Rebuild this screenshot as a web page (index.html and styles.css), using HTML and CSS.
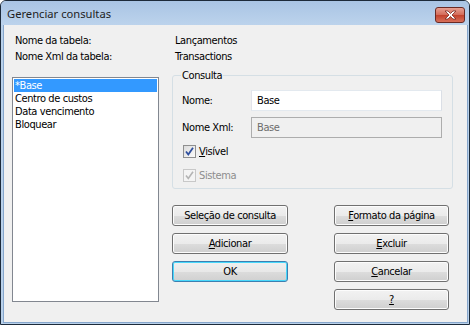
FILE: index.html
```html
<!DOCTYPE html>
<html lang="pt">
<head>
  <meta charset="UTF-8" />
  <title>Gerenciar consultas</title>
  <link rel="stylesheet" href="styles.css">
</head>
<body>
  <div class="window">
    <div class="titlebar">
      <span class="title">Gerenciar consultas</span>
      <span class="close-btn">
        <svg width="15" height="10" viewBox="0 0 15 10">
          <path d="M2 1 L5 1 L7.5 3.5 L10 1 L13 1 L9 5 L13 9 L10 9 L7.5 6.5 L5 9 L2 9 L6 5 Z" fill="#fff" stroke="#7a2a22" stroke-width="0.8" stroke-linejoin="round"/>
        </svg>
      </span>
    </div>

    <div class="client">
      <div class="info">
        <span>Nome da tabela:</span><span>Lançamentos</span>
        <span>Nome Xml da tabela:</span><span>Transactions</span>
      </div>

      <div class="main">
        <ul class="listbox">
          <li class="selected">*Base</li>
          <li>Centro de custos</li>
          <li>Data vencimento</li>
          <li>Bloquear</li>
        </ul>

        <div class="side">
          <fieldset class="groupbox">
            <legend>Consulta</legend>
            <div class="field-row">
              <label>Nome:</label>
              <span class="textbox">Base</span>
            </div>
            <div class="field-row">
              <label>Nome Xml:</label>
              <span class="textbox disabled">Base</span>
            </div>
            <div class="check">
              <span class="box">
                <svg width="11" height="11" viewBox="0 0 11 11"><path d="M2 5.5 L4.3 8.5 L9 1.8" fill="none" stroke="#2f4f9e" stroke-width="1.8"/></svg>
              </span>
              <span><u>V</u>isível</span>
            </div>
            <div class="check off">
              <span class="box">
                <svg width="11" height="11" viewBox="0 0 11 11"><path d="M2 5.5 L4.3 8.5 L9 1.8" fill="none" stroke="#b4b4b4" stroke-width="1.6"/></svg>
              </span>
              <span>Sistema</span>
            </div>
          </fieldset>

          <div class="buttons">
            <button>Seleção de consulta</button>
            <button><u>F</u>ormato da página</button>
            <button><u>A</u>dicionar</button>
            <button><u>E</u>xcluir</button>
            <button class="default">OK</button>
            <button><u>C</u>ancelar</button>
            <span></span>
            <button><u>?</u></button>
          </div>
        </div>
      </div>
    </div>
  </div>
</body>
</html>
```

FILE: styles.css
```css
* {
  box-sizing: border-box;
}

body {
  margin: 0;
  background: #fff;
  font-family: 'DejaVu Sans Condensed', 'Liberation Sans', sans-serif;
  font-size: 11px;
  letter-spacing: -0.4px;
  color: #000;
}

.window {
  width: 470px;
  height: 325px;
  border: 1px solid #1c2a3a;
  border-radius: 6px 6px 0 0;
  background: #b9d1ea;
  display: flex;
  flex-direction: column;
}

.titlebar {
  height: 24px;
  display: flex;
  align-items: center;
  justify-content: space-between;
  padding: 0 4px 0 6px;
  background: linear-gradient(#a9c4e4, #bcd3ec);
  border-radius: 5px 5px 0 0;
}

.title {
  font-family: 'Noto Sans', 'Open Sans', sans-serif;
  font-size: 11.2px;
  letter-spacing: 0;
  color: #1e1e1e;
  margin-top: 1px;
}

.close-btn {
  width: 30px;
  height: 16px;
  margin-top: 3px;
  border: 1px solid #6a2a24;
  border-radius: 3px;
  background: linear-gradient(#e7a092, #d36a58 50%, #c2412c 51%, #d8705a);
  display: flex;
  align-items: center;
  justify-content: center;
}

.client {
  flex: 1;
  margin: 0 1px 1px 2px;
  background: #f0f0f0;
  border: 1px solid #86a6cc;
  border-top: none;
  padding: 8px 0 0 8px;
}

.info {
  display: grid;
  grid-template-columns: 160px auto;
  line-height: 16px;
  padding-left: 3px;
}

.main {
  display: flex;
  gap: 13px;
}

.listbox {
  list-style: none;
  margin: 12px 0 0 0;
  padding: 1px;
  width: 147px;
  height: 225px;
  background: #fff;
  border: 1px solid #828790;
}

.listbox li {
  height: 13px;
  line-height: 13px;
  padding-left: 1px;
}

.listbox li.selected {
  background: #3399ff;
  color: #fff;
}

.side {
  width: 281px;
}

.groupbox {
  margin: 4px 0 0 0;
  padding: 2px 10px 0 9px;
  height: 120px;
  border: 1px solid #d5dfe5;
  border-radius: 3px;
}

.groupbox legend {
  padding: 0 1px;
  margin-left: -1px;
  line-height: 13px;
}

.field-row {
  display: flex;
  align-items: center;
  height: 21px;
  margin-top: 6px;
}

.field-row:first-of-type {
  margin-top: 6px;
}

.field-row label {
  width: 69px;
}

.textbox {
  width: 191px;
  height: 21px;
  line-height: 19px;
  padding-left: 5px;
  background: #fff;
  border: 1px solid #abadb3;
  border-top-color: #e3e9ef;
  border-left-color: #e2e3ea;
  border-right-color: #dbdfe6;
  border-bottom-color: #e3e9ef;
}

.textbox.disabled {
  background: #f0f0f0;
  color: #6d6d6d;
  border: 1px solid #adadad;
}

.check {
  display: flex;
  align-items: center;
  gap: 3px;
  height: 14px;
  margin-top: 6px;
  padding-left: 1px;
}

.check + .check {
  margin-top: 10px;
}

.check .box {
  width: 13px;
  height: 13px;
  border: 1px solid #8f8f8f;
  background: linear-gradient(135deg, #dcdcdc, #fbfbfb);
  display: flex;
  align-items: center;
  justify-content: center;
}

.check.off {
  color: #8d8d8d;
}

.check.off .box {
  border-color: #c8c8c8;
  background: #f4f4f4;
}

.buttons {
  display: grid;
  grid-template-columns: 116px 115px;
  column-gap: 46px;
  row-gap: 7px;
  margin-top: 16px;
}

button {
  height: 21px;
  padding: 0;
  font-family: inherit;
  font-size: 11px;
  letter-spacing: -0.4px;
  color: #000;
  border: 1px solid #707070;
  border-radius: 3px;
  background: linear-gradient(#f2f2f2, #ebebeb 50%, #dddddd 51%, #cfcfcf);
  box-shadow: inset 0 0 0 1px #fcfcfc;
}

button.default {
  border-color: #3c7fb1;
  background: linear-gradient(#f0f0f0, #e8e8e8 50%, #dcdcdc 51%, #d0d0d0);
  box-shadow: inset 0 0 0 1px #48d8fb;
}
```
